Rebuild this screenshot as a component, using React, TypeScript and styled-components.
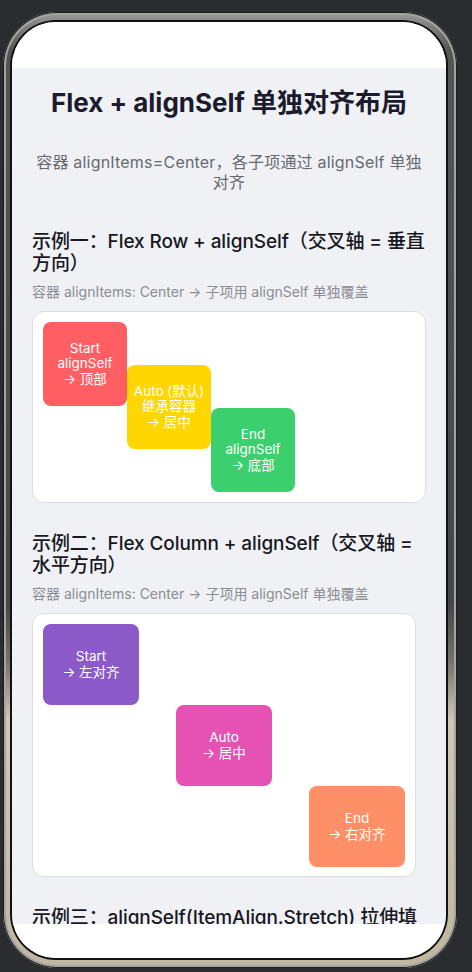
import React from "react";
import styled, { createGlobalStyle } from "styled-components";

const Global = createGlobalStyle`
  html, body { margin: 0; padding: 0; background: #2b2c30; }
  body { font-family: "Inter", "Noto Sans CJK SC", sans-serif; }
  * { box-sizing: border-box; }
`;

const Stage = styled.div`
  width: 472px;
  height: 972px;
  padding: 12px 0 0 3px;
  overflow: hidden;
`;

const Phone = styled.div`
  width: 454px;
  height: 956px;
  border-radius: 54px;
  padding: 10px 11px 10px 9px;
  background: linear-gradient(
    180deg,
    #9a9a9a 0%,
    #555555 4%,
    #474747 62%,
    #77726a 68%,
    #cfc8b3 74%,
    #bfb79f 100%
  );
  box-shadow: inset 0 0 0 1px #1c1c1c, inset 0 0 0 3px #a4a4a4;
`;

const Screen = styled.div`
  width: 100%;
  height: 100%;
  border-radius: 44px;
  overflow: hidden;
  background: #ffffff;
  display: flex;
  flex-direction: column;
  box-shadow: 0 0 0 2px #121212;
`;

const StatusBar = styled.div`
  height: 46px;
  flex: none;
  background: #ffffff;
`;

const NavBar = styled.div`
  height: 34px;
  flex: none;
  background: #ffffff;
`;

const Content = styled.div`
  flex: 1;
  min-height: 0;
  overflow: hidden;
  background: #f0f1f5;
  padding: 20px 20px 0 20px;
  display: flex;
  flex-direction: column;
`;

const Title = styled.h1`
  margin: 0;
  font-size: 26px;
  line-height: 30px;
  font-weight: 700;
  color: #1b1b2d;
  text-align: center;
`;

const Subtitle = styled.p`
  margin: 34px 0 0;
  font-size: 16px;
  line-height: 20px;
  letter-spacing: 0.2px;
  color: #666a70;
  text-align: center;
`;

const Section = styled.section<{ $gap: number }>`
  margin-top: ${(p) => p.$gap}px;
  display: flex;
  flex-direction: column;
`;

const SectionTitle = styled.h2`
  margin: 0;
  font-size: 19px;
  line-height: 22px;
  letter-spacing: -0.1px;
  font-weight: 500;
  color: #18181f;
`;

const Caption = styled.p`
  margin: 8px 0 0;
  font-size: 14px;
  line-height: 18px;
  color: #8a8d93;
`;

const Card = styled.div<{ $dir: "row" | "column"; $trim?: number }>`
  margin-top: 10px;
  margin-right: ${(p) => p.$trim ?? 0}px;
  background: #ffffff;
  border: 1px solid #dcdde1;
  border-radius: 12px;
  padding: 10px;
  display: flex;
  flex-direction: ${(p) => p.$dir};
  align-items: center;
  height: ${(p) => (p.$dir === "row" ? 192 : 264)}px;
`;

const Box = styled.div<{ $bg: string; $self: string; $w: number; $h: number }>`
  width: ${(p) => p.$w}px;
  height: ${(p) => p.$h}px;
  flex: none;
  align-self: ${(p) => p.$self};
  background: ${(p) => p.$bg};
  border-radius: 8px;
  color: #ffffff;
  font-size: 13.5px;
  line-height: 15.5px;
  text-align: center;
  display: flex;
  align-items: center;
  justify-content: center;
  white-space: pre-line;
`;

const rowItems = [
  { text: "Start\nalignSelf\n→ 顶部", bg: "#ff5e62", self: "flex-start" },
  { text: "Auto (默认)\n继承容器\n→ 居中", bg: "#ffd600", self: "center" },
  { text: "End\nalignSelf\n→ 底部", bg: "#3ccf6e", self: "flex-end" },
];

const colItems = [
  { text: "Start\n→ 左对齐", bg: "#8c5ac8", self: "flex-start" },
  { text: "Auto\n→ 居中", bg: "#e652b4", self: "center" },
  { text: "End\n→ 右对齐", bg: "#ff8f66", self: "flex-end" },
];

export default function App() {
  return (
    <>
      <Global />
      <Stage>
        <Phone>
          <Screen>
            <StatusBar />
            <Content>
              <Title>Flex + alignSelf 单独对齐布局</Title>
              <Subtitle>容器 alignItems=Center，各子项通过 alignSelf 单独对齐</Subtitle>

              <Section $gap={39}>
                <SectionTitle>示例一：Flex Row + alignSelf（交叉轴 = 垂直方向）</SectionTitle>
                <Caption>容器 alignItems: Center → 子项用 alignSelf 单独覆盖</Caption>
                <Card $dir="row">
                  {rowItems.map((it) => (
                    <Box key={it.text} $bg={it.bg} $self={it.self} $w={84} $h={84}>
                      {it.text}
                    </Box>
                  ))}
                </Card>
              </Section>

              <Section $gap={30}>
                <SectionTitle>示例二：Flex Column + alignSelf（交叉轴 = 水平方向）</SectionTitle>
                <Caption>容器 alignItems: Center → 子项用 alignSelf 单独覆盖</Caption>
                <Card $dir="column" $trim={10}>
                  {colItems.map((it) => (
                    <Box key={it.text} $bg={it.bg} $self={it.self} $w={96} $h={81}>
                      {it.text}
                    </Box>
                  ))}
                </Card>
              </Section>

              <Section $gap={30}>
                <SectionTitle>示例三：alignSelf(ItemAlign.Stretch) 拉伸填充</SectionTitle>
              </Section>
            </Content>
            <NavBar />
          </Screen>
        </Phone>
      </Stage>
    </>
  );
}
